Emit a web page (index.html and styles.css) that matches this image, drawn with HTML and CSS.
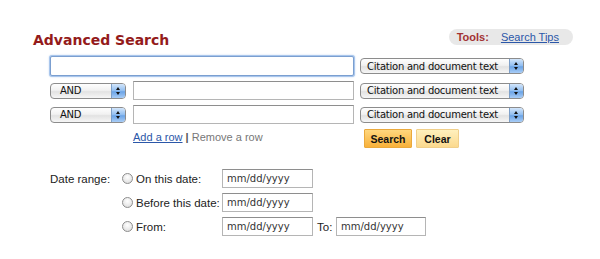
FILE: index.html
```html
<!DOCTYPE html>
<html>
  <head>
    <meta charset="UTF-8" />
    <title>Advanced Search</title>
    <link rel="stylesheet" href="styles.css">
  </head>
  <body>
    <div class="page">
      <div class="head">
        <h1 class="title">Advanced Search</h1>
        <div class="tools">
          <span class="tools_lbl">Tools:</span>
          <a class="tools_link" href="#">Search Tips</a>
        </div>
      </div>

      <div class="search">
        <input class="txt txt_main" type="text" />
        <div class="sel sel_field"><span>Citation and document text</span><i class="arr"></i></div>

        <div class="sel sel_op"><span>AND</span><i class="arr"></i></div>
        <input class="txt" type="text" />
        <div class="sel sel_field"><span>Citation and document text</span><i class="arr"></i></div>

        <div class="sel sel_op"><span>AND</span><i class="arr"></i></div>
        <input class="txt" type="text" />
        <div class="sel sel_field"><span>Citation and document text</span><i class="arr"></i></div>

        <div class="rows_links">
          <a class="add" href="#">Add a row</a> <b>|</b> <span class="remove">Remove a row</span>
        </div>
        <div class="btns">
          <button class="btn btn_search">Search</button>
          <button class="btn btn_clear">Clear</button>
        </div>
      </div>

      <div class="dates">
        <div class="date_lbl">Date range:</div>
        <label class="opt"><i class="radio"></i>On this date:</label>
        <input class="txt date" type="text" value="mm/dd/yyyy" />

        <label class="opt"><i class="radio"></i>Before this date:</label>
        <input class="txt date" type="text" value="mm/dd/yyyy" />

        <label class="opt"><i class="radio"></i>From:</label>
        <input class="txt date" type="text" value="mm/dd/yyyy" />
        <span class="to">To:</span>
        <input class="txt date" type="text" value="mm/dd/yyyy" />
      </div>
    </div>
  </body>
</html>
```

FILE: styles.css
```css
* {
  margin: 0;
  padding: 0;
  box-sizing: border-box;
}
body {
  background: #fff;
  font-family: "Liberation Sans", Arial, sans-serif;
  color: #222;
}
.page {
  width: 600px;
  height: 259px;
  padding: 29px 0 0 33px;
}
.head {
  display: flex;
  justify-content: space-between;
  align-items: flex-start;
  width: 540px;
  height: 27px;
}
.title {
  font-family: "DejaVu Sans", sans-serif;
  font-size: 14px;
  font-weight: bold;
  color: #941b1b;
  margin-top: 3px;
}
.tools {
  display: flex;
  align-items: center;
  height: 16px;
  padding: 0 14px 0 8px;
  background: #e8e8e8;
  border-radius: 8px;
  font-size: 11px;
}
.tools_lbl {
  font-weight: bold;
  color: #a33232;
  margin-right: 12px;
}
.tools_link {
  color: #2b57a8;
}

/* search rows */
.search {
  display: grid;
  grid-template-columns: 76px 222px 164px;
  grid-template-rows: 20px 19px 19px 19px;
  column-gap: 6px;
  row-gap: 5px;
  margin-left: 17px;
}
.search .txt {
  margin-left: 1px;
}
.txt {
  height: 19px;
  border: 1px solid #b5b5b5;
  border-top-color: #8e8e8e;
  background: #fff;
  outline: 0;
  font-family: "DejaVu Sans", sans-serif;
  font-size: 10px;
  color: #222;
  padding: 0 4px;
}
.search .txt_main {
  grid-column: 1 / 3;
  height: 20px;
  margin-left: 0;
  border: 1px solid #7b9fd0;
  border-radius: 2px;
  box-shadow: 0 0 0 1px #a9c6ec, 0 0 2px 1px #c4d8f2;
}
.sel {
  align-self: center;
  display: flex;
  align-items: center;
  height: 16px;
  border: 1px solid #8c8c8c;
  border-radius: 4px;
  background: linear-gradient(#fefefe, #f1f1f1 45%, #e2e2e2 55%, #f6f6f6);
  font-family: "DejaVu Sans", sans-serif;
  font-size: 10px;
  letter-spacing: -0.25px;
  color: #111;
  overflow: hidden;
  white-space: nowrap;
}
.sel span {
  flex: 1;
  padding-left: 6px;
}
.sel_op span {
  padding-left: 9px;
}
.arr {
  position: relative;
  flex: none;
  width: 14px;
  height: 14px;
  background: linear-gradient(#d3e6fb, #8ebcf0 50%, #6aa3e6 55%, #a9cdf6);
  border-left: 1px solid #7d9fc8;
}
.arr:before,
.arr:after {
  content: "";
  position: absolute;
  left: 4px;
  border-left: 2.5px solid transparent;
  border-right: 2.5px solid transparent;
}
.arr:before {
  top: 3px;
  border-bottom: 3px solid #111;
}
.arr:after {
  top: 8px;
  border-top: 3px solid #111;
}

.rows_links {
  grid-column: 2;
  margin-left: 1px;
  padding-top: 2px;
  font-size: 11px;
  color: #777;
}
.add {
  color: #2b57a8;
}
.rows_links b {
  color: #555;
}
.btns {
  display: flex;
  gap: 4px;
  padding-left: 4px;
}
.btn {
  height: 19px;
  border: 1px solid #e7b35a;
  border-radius: 1px;
  font-family: "Liberation Sans", Arial, sans-serif;
  font-size: 10.5px;
  font-weight: bold;
  color: #111;
}
.btn_search {
  width: 48px;
  background: linear-gradient(#ffd77e, #f8b13a);
  border-color: #eaa93c;
}
.btn_clear {
  width: 43px;
  background: linear-gradient(#fff0bd, #fbd98e);
  border-color: #f0cf8a;
}

/* date range */
.dates {
  display: grid;
  grid-template-columns: 72px 100px 91px 23px 90px;
  grid-auto-rows: 19px;
  row-gap: 5px;
  margin: 21px 0 0 17px;
  font-size: 11.5px;
  color: #222;
}
.date_lbl,
.opt,
.to {
  display: flex;
  align-items: center;
}
.date_lbl {
  grid-row: 1 / 4;
  align-self: start;
  height: 19px;
}
.opt {
  grid-column: 2;
  white-space: nowrap;
}
.radio {
  width: 11px;
  height: 11px;
  margin-right: 3px;
  border: 1px solid #8d8d8d;
  border-radius: 50%;
  background: radial-gradient(circle at 50% 35%, #fff, #e4e4e4 70%, #c9c9c9);
}
.date {
  color: #333;
}
.to {
  padding-left: 4px;
}
```
